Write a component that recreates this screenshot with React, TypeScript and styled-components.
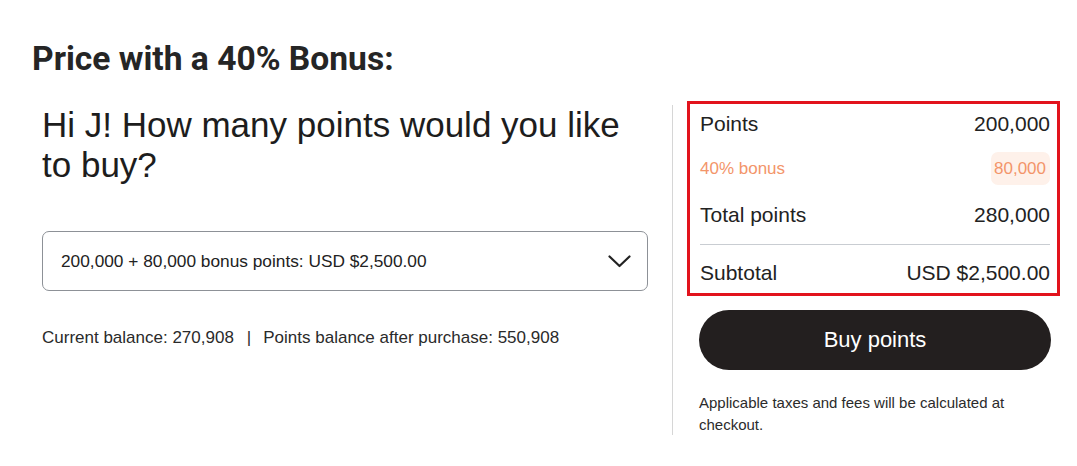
import React from "react";
import styled, { createGlobalStyle } from "styled-components";

const GlobalStyle = createGlobalStyle`
  html, body {
    margin: 0;
    padding: 0;
    background: #ffffff;
  }
  body {
    font-family: "Liberation Sans", Arial, sans-serif;
    color: #222222;
  }
  * { box-sizing: border-box; }
`;

const Page = styled.div`
  width: 1077px;
  height: 466px;
  overflow: hidden;
  background: #ffffff;
`;

const Title = styled.h1`
  margin: 0 0 0 32px;
  padding-top: 39px;
  font-family: Roboto, "Liberation Sans", sans-serif;
  font-weight: 700;
  font-size: 33.6px;
  line-height: 40px;
  color: #252525;
`;

const Main = styled.div`
  display: flex;
  align-items: stretch;
  margin: 22px 0 0 42px;
`;

const LeftCol = styled.div`
  width: 606px;
  padding-top: 4px;
  display: flex;
  flex-direction: column;
`;

const Heading = styled.h2`
  margin: 0;
  font-family: "Liberation Sans", Arial, sans-serif;
  font-weight: 400;
  font-size: 35px;
  line-height: 40px;
  color: #1d1d1d;
`;

const Select = styled.div`
  margin-top: 46px;
  height: 60px;
  border: 1px solid #8d9197;
  border-radius: 7px;
  display: flex;
  align-items: center;
  justify-content: space-between;
  padding: 0 16px 0 18px;
  font-size: 17.3px;
  color: #222222;
`;

const Balance = styled.div`
  margin-top: 37px;
  font-size: 17px;
  line-height: 20px;
  color: #2a2a2a;
  display: flex;
  align-items: center;
`;

const Pipe = styled.span`
  margin: 0 12px 0 13px;
`;

const VDivider = styled.div`
  width: 1px;
  margin: 4px 14px 0 24px;
  background: #d6d6d6;
`;

const RightCol = styled.div`
  width: 373px;
  display: flex;
  flex-direction: column;
`;

const SummaryBox = styled.div`
  border: 3px solid #e2131d;
  padding: 8px 7px 8px 10px;
  display: flex;
  flex-direction: column;
`;

const Row = styled.div<{ $gap?: number }>`
  display: flex;
  justify-content: space-between;
  align-items: center;
  margin-top: ${(p) => p.$gap ?? 0}px;
  font-size: 21px;
  line-height: 24px;
  color: #222222;
`;

const BonusRow = styled.div`
  display: flex;
  justify-content: space-between;
  align-items: center;
  margin-top: 16px;
  font-size: 17px;
  line-height: 33px;
  color: #f3956a;
`;

const Pill = styled.span`
  background: #fef1ea;
  border-radius: 7px;
  padding: 0 4px 0 3px;
  height: 33px;
`;

const HLine = styled.div`
  margin-top: 17px;
  height: 1px;
  background: #c9cdd2;
`;

const BuyButton = styled.button`
  margin: 14px 9px 0 12px;
  height: 60px;
  border: none;
  border-radius: 30px;
  background: #231f1f;
  color: #ffffff;
  font-family: "Liberation Sans", Arial, sans-serif;
  font-size: 22px;
  cursor: pointer;
`;

const Footnote = styled.p`
  margin: 22px 9px 0 12px;
  font-size: 15px;
  line-height: 21.5px;
  color: #2b2b2b;
`;

const Chevron = () => (
  <svg width="23" height="13" viewBox="0 0 23 13" fill="none">
    <polyline
      points="1.5,1.5 11.5,11 21.5,1.5"
      stroke="#222"
      strokeWidth="2.2"
      strokeLinecap="round"
      strokeLinejoin="round"
    />
  </svg>
);

export default function App() {
  return (
    <Page>
      <GlobalStyle />
      <Title>Price with a 40% Bonus:</Title>
      <Main>
        <LeftCol>
          <Heading>Hi J! How many points would you like to buy?</Heading>
          <Select>
            <span>200,000 + 80,000 bonus points: USD $2,500.00</span>
            <Chevron />
          </Select>
          <Balance>
            <span>Current balance: 270,908</span>
            <Pipe>|</Pipe>
            <span>Points balance after purchase: 550,908</span>
          </Balance>
        </LeftCol>
        <VDivider />
        <RightCol>
          <SummaryBox>
            <Row>
              <span>Points</span>
              <span>200,000</span>
            </Row>
            <BonusRow>
              <span>40% bonus</span>
              <Pill>80,000</Pill>
            </BonusRow>
            <Row $gap={18}>
              <span>Total points</span>
              <span>280,000</span>
            </Row>
            <HLine />
            <Row $gap={16}>
              <span>Subtotal</span>
              <span>USD $2,500.00</span>
            </Row>
          </SummaryBox>
          <BuyButton>Buy points</BuyButton>
          <Footnote>Applicable taxes and fees will be calculated at checkout.</Footnote>
        </RightCol>
      </Main>
    </Page>
  );
}
